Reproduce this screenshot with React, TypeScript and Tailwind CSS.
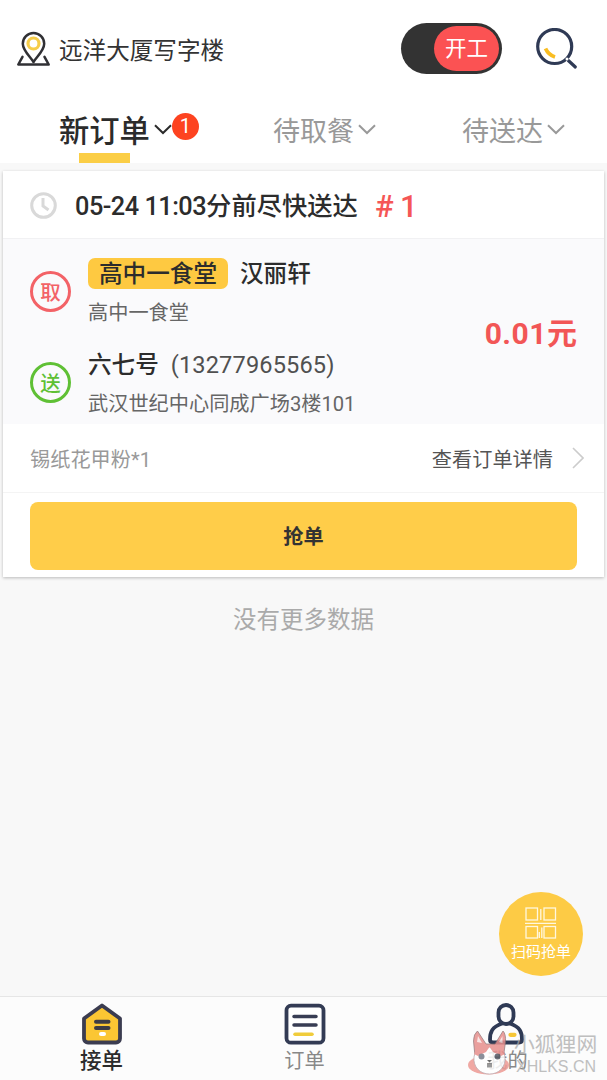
import type { ReactNode } from "react";
import clsx from "clsx";

interface Order {
  deadline: string;
  hint: string;
  serial: number;
  tag: string;
  shop: string;
  shopAddress: string;
  customer: string;
  phone: string;
  address: string;
  price: string;
  goods: string;
}

const order: Order = {
  deadline: "05-24 11:03",
  hint: "分前尽快送达",
  serial: 1,
  tag: "高中一食堂",
  shop: "汉丽轩",
  shopAddress: "高中一食堂",
  customer: "六七号",
  phone: "(13277965565)",
  address: "武汉世纪中心同成广场3楼101",
  price: "0.01",
  goods: "锡纸花甲粉*1",
};

const LocationIcon = () => (
  <svg width="34" height="36" viewBox="0 0 34 36" fill="none" stroke="#303034" strokeLinecap="round" strokeLinejoin="round">
    <path d="M17.500 31C14.500 26 6.800 19.500 6.800 12.700a10.700 10.700 0 0 1 21.400 0C28.200 19.500 20.500 26 17.500 31z" strokeWidth="2.500" />
    <circle cx="17.500" cy="12.500" r="5.500" stroke="#f6cd4a" strokeWidth="3.200" />
    <path d="M6.500 25.800L2.300 33.500h30.400L28.500 25.800" strokeWidth="2.500" />
  </svg>
);

const SearchIcon = () => (
  <svg width="42" height="42" viewBox="0 0 42 42" fill="none" strokeLinecap="round">
    <circle cx="18.700" cy="18.500" r="17" stroke="#2f3a55" strokeWidth="3.200" />
    <path d="M9.500 20.500q3 6.500 9.500 8.500" stroke="#f9bd22" strokeWidth="3.800" strokeLinecap="butt" />
    <path d="M32.300 32.500l7 6.500" stroke="#2f3a55" strokeWidth="3.200" />
    <circle cx="31" cy="31" r="1.500" fill="#fff" />
  </svg>
);

const DownIcon = () => (
  <svg width="18" height="11" viewBox="0 0 18 11" fill="none" stroke="currentColor" strokeWidth="2">
    <path d="M1 1.200L9 9l8-7.800" />
  </svg>
);

const ClockIcon = () => (
  <svg width="27" height="27" viewBox="0 0 27 27" fill="none" stroke="#d9d9d9" strokeWidth="3">
    <circle cx="13.500" cy="13.500" r="11.800" />
    <path d="M13 6v8l5.500 4" />
  </svg>
);

const ScanIcon = () => (
  <svg width="32" height="32" viewBox="0 0 32 32" fill="none" stroke="#fff7df" strokeWidth="1.300">
    <rect x="1" y="1" width="11.500" height="12" />
    <rect x="19" y="1" width="11.500" height="12" />
    <rect x="1" y="19.500" width="11.500" height="11.500" />
    <rect x="19" y="19.500" width="11.500" height="11.500" />
    <path d="M15.800 2v11M0 16.300h31M16.800 20.500V31M14.300 25v6" />
  </svg>
);

const HouseIcon = () => (
  <svg width="42" height="42" viewBox="0 0 42 42" fill="none" strokeLinecap="round" strokeLinejoin="round">
    <path d="M21 2.500L39 15.500v20a4 4 0 0 1-4 4H7a4 4 0 0 1-4-4v-20z" fill="#fbc633" stroke="#3b3c50" strokeWidth="3.800" />
    <path d="M15 18.800h12.500M15 25h12.500" stroke="#3d3b45" strokeWidth="4" />
    <path d="M20 31h3" stroke="#fff" strokeWidth="4" />
  </svg>
);

const ListIcon = () => (
  <svg width="42" height="42" viewBox="0 0 42 42" fill="none" strokeLinecap="round">
    <rect x="2.500" y="2.700" width="37" height="37" rx="4.500" fill="#fff" stroke="#333b54" strokeWidth="3.800" />
    <path d="M10 13.500h22M10 22h22" stroke="#383d54" strokeWidth="3.500" />
    <path d="M11 31.200h17" stroke="#f0cc3b" strokeWidth="3.500" />
  </svg>
);

const UserIcon = () => (
  <svg className="mr-1" width="36" height="42" viewBox="0 0 36 42" fill="none" strokeLinecap="round" strokeLinejoin="round">
    <path d="M14 20.500C4 24 2 29 2 36.500q0 3 3 3h26q3 0 3-3C34 29 32 24 22 20.500" stroke="#2f3a55" strokeWidth="3.800" />
    <rect x="10.500" y="2" width="15" height="19" rx="7.500" stroke="#2f3a55" strokeWidth="3.800" />
    <path d="M22.500 31.800h4" stroke="#f6c636" strokeWidth="4.200" />
  </svg>
);

const FoxIcon = () => (
  <svg className="shrink-0" width="44" height="48" viewBox="0 0 44 48" fill="none">
    <ellipse cx="20.500" cy="36" rx="20.500" ry="9.500" fill="#ee9a94" />
    <path d="M7 27L5.500 12q0-7 4-10l8.500 13h9L35 2q3 3 2.500 11l-2 14z" fill="#e88f8d" stroke="#8a6d70" strokeWidth=".8" />
    <path d="M9 13l1-6 4 7zM31 13l3.500-6v7z" fill="#fff" opacity=".75" />
    <path d="M6 28c1-7 7-10 15.500-10S36 21 37 28c1 10-6 17-15.500 17S5 38 6 28z" fill="#fff" stroke="#b5a0a4" strokeWidth=".8" />
    <path d="M6 25c3-7 9-9 15.500-9S35 18 37 25l-4 2-8-4-3.500-5L18 23l-8 4z" fill="#e88f8d" />
    <circle cx="13.500" cy="27.500" r="3" fill="#777b88" />
    <circle cx="29.500" cy="27.500" r="3" fill="#535763" />
    <path d="M19 31l2.500 2.500L24 31z" fill="#555" />
    <path d="M19 34h5v4.500h-5z" fill="#888" />
  </svg>
);

const tabs = [
  { label: "新订单", count: 1, active: true, place: "pl-[59px] w-[273px]" },
  { label: "待取餐", count: 0, active: false, place: "w-[189px]" },
  { label: "待送达", count: 0, active: false, place: "w-[145px]" },
];

const navs: { label: string; icon: ReactNode; active: boolean }[] = [
  { label: "接单", icon: <HouseIcon />, active: true },
  { label: "订单", icon: <ListIcon />, active: false },
  { label: "我的", icon: <UserIcon />, active: false },
];

const Header = () => (
  <header className="flex h-[98px] items-center bg-white pl-4 pr-[29px]">
    <div className="flex items-center gap-[9px]">
      <LocationIcon />
      <span className="pt-[5px] text-[23.6px] text-[#333]">远洋大厦写字楼</span>
    </div>
    <div className="mb-[2px] ml-auto flex h-[51px] w-[101px] items-center justify-end rounded-full bg-[#333] pr-[3px]">
      <span className="flex h-[45px] w-[65px] items-center justify-center rounded-full bg-[#fb5253] pt-[3px] text-[21.500px] text-white">
        开工
      </span>
    </div>
    <div className="ml-[34px]">
      <SearchIcon />
    </div>
  </header>
);

const OrderTabs = () => (
  <div className="flex h-[65px] bg-white">
    {tabs.map((tab) => (
      <div key={tab.label} className={clsx("flex shrink-0 flex-col", tab.place)}>
        <div
          className={clsx(
            "flex h-[55px] items-center pt-[9px]",
            tab.active ? "text-[30.3px] font-medium text-[#2b2b2b]" : "text-[27px] text-[#999]"
          )}
        >
          <span className="pt-1">{tab.label}</span>
          <span className="mb-[2px] ml-1">
            <DownIcon />
          </span>
          {tab.count > 0 && (
            <span className="mb-[8px] flex size-[27px] items-center justify-center rounded-full bg-[#fd4320] text-[20px] font-normal text-white">
              {tab.count}
            </span>
          )}
        </div>
        {tab.active && <div className="ml-5 h-[10px] w-[51px] bg-[#fbce46]" />}
      </div>
    ))}
  </div>
);

const Place = (props: { mark: string; color: string; children: ReactNode }) => (
  <div className="flex items-center">
    <span
      className={clsx(
        "mr-[17px] mb-[3px] flex size-[41px] items-center justify-center rounded-full border-[3px] pt-[3px] text-[20.500px] font-medium",
        props.color
      )}
    >
      {props.mark}
    </span>
    <div>{props.children}</div>
  </div>
);

const OrderCard = ({ info }: { info: Order }) => (
  <section className="mx-[3px] mt-2 h-[406px] bg-white shadow-[0_1px_3px_rgba(0,0,0,0.25)]">
    <div className="flex h-[68px] items-center border-b border-[#f1f1f3] pt-[2px] pl-[27px] font-medium">
      <ClockIcon />
      <span className="ml-[18px] pt-[3px] text-[25.3px] text-[#2c2c2c]">
        <span className="tracking-[-0.5px]">{info.deadline}</span>
        {info.hint}
      </span>
      <span className="ml-[17px] pt-[3px] text-[31px] tracking-[-0.6px] text-[#f55656]"># {info.serial}</span>
    </div>
    <div className="flex h-[185px] justify-between bg-[#fafafc] px-[27px] pt-[19px]">
      <div>
        <Place mark="取" color="border-[#f36267] text-[#f36267]">
          <div className="flex h-[31px] items-center gap-3 text-[23.6px] font-medium text-[#2c2c2c]">
            <span className="flex h-[31px] w-[140px] items-center justify-center rounded-[7px] bg-[#fec941] pt-[3px]">
              {info.tag}
            </span>
            <span className="pt-[3px]">{info.shop}</span>
          </div>
          <p className="mt-[9px] text-[20.2px] leading-[30px] text-[#666]">{info.shopAddress}</p>
        </Place>
        <div className="mt-[21px]">
          <Place mark="送" color="border-[#5fc035] text-[#5fc035]">
            <div className="flex h-[31px] items-center gap-3 pt-[3px] text-[23.6px] text-[#2c2c2c]">
              <span className="font-medium">{info.customer}</span>
              <span className="tracking-[0.12px] text-[#505050]">{info.phone}</span>
            </div>
            <p className="mt-[9px] text-[20.2px] leading-[30px] text-[#666]">{info.address}</p>
          </Place>
        </div>
      </div>
      <span className="mt-[54px] text-[30px] leading-[44px] font-bold text-[#f25656]">
        <span className="tracking-[0.5px]">{info.price}</span>元
      </span>
    </div>
    <div className="flex h-[69px] items-center border-b border-[#f4f4f4] pl-[27px] pr-5 text-[20.2px]">
      <span className="pt-1 text-[#999]">{info.goods}</span>
      <span className="ml-auto pt-1 text-[#555]">查看订单详情</span>
      <svg className="ml-[19px]" width="12" height="22" viewBox="0 0 12 22" fill="none" stroke="#ccc" strokeWidth="1.600">
        <path d="M1 1l10 10L1 21" />
      </svg>
    </div>
    <button className="mx-[27px] mt-[9px] flex h-[68px] w-[547px] items-center justify-center rounded-lg bg-[#ffcd49] pt-[3px] text-[20.2px] font-bold text-[#333]">
      抢单
    </button>
  </section>
);

const Watermark = () => (
  <div className="absolute right-0 bottom-0 flex h-[51px] w-[139px] opacity-85">
    <FoxIcon />
    <div className="pt-1 pl-[2px] text-[#a9a9a9] opacity-85">
      <p className="text-[20.800px] leading-[25px]">小狐狸网</p>
      <p className="pl-[2px] font-['Liberation_Sans'] text-[16px] leading-[17px]">XHLKS.CN</p>
    </div>
  </div>
);

const App = () => {
  return (
    <div className="relative flex h-[1080px] w-[607px] flex-col overflow-hidden bg-[#f8f8f8] font-[Roboto,'Noto_Sans_CJK_SC',sans-serif] whitespace-nowrap">
      <Header />
      <OrderTabs />
      <OrderCard info={order} />
      <p className="mt-[25px] text-center text-[23.500px] leading-[36px] text-[#aaa]">没有更多数据</p>

      <button className="absolute right-6 bottom-[104px] flex size-[84px] flex-col items-center rounded-full bg-[#fdcb45] pt-[15px] text-[15px] leading-[27px] text-white">
        <ScanIcon />
        <span>扫码抢单</span>
      </button>

      <nav className="mt-auto flex h-[84px] border-t border-[#e6e6e6] bg-[#fcfcfc]">
        {navs.map((nav) => (
          <div key={nav.label} className="flex w-[203px] shrink-0 flex-col items-center pt-[6px]">
            {nav.icon}
            <span
              className={clsx(
                "pt-[2px] leading-[28px]",
                nav.active ? "text-[21.500px] font-medium text-[#2c2c2c]" : "text-[20.2px] text-[#888]"
              )}
            >
              {nav.label}
            </span>
          </div>
        ))}
      </nav>
      <Watermark />
    </div>
  );
};

export default App;
